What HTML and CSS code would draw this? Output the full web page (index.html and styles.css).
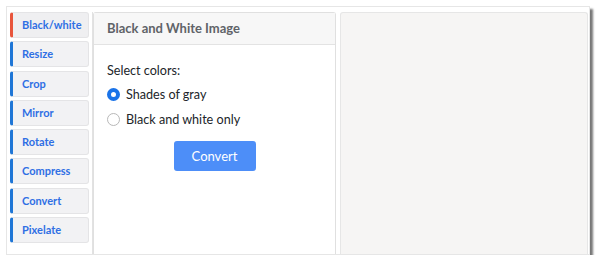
FILE: index.html
```html
<!DOCTYPE html>
<html lang="en">
<head>
    <meta charset="UTF-8">
    <title>Black and White Image</title>
    <link rel="stylesheet" href="styles.css">
</head>
<body>
    <div class="frame">
        <!-- Tool tabs -->
        <nav class="tabs">
            <a class="tab active">Black/white</a>
            <a class="tab">Resize</a>
            <a class="tab">Crop</a>
            <a class="tab">Mirror</a>
            <a class="tab">Rotate</a>
            <a class="tab">Compress</a>
            <a class="tab">Convert</a>
            <a class="tab">Pixelate</a>
        </nav>

        <!-- Options panel -->
        <section class="panel">
            <div class="panel-header">Black and White Image</div>
            <div class="panel-body">
                <p class="label">Select colors:</p>
                <label class="radio">
                    <input type="radio" name="colors" checked>
                    <span>Shades of gray</span>
                </label>
                <label class="radio">
                    <input type="radio" name="colors">
                    <span>Black and white only</span>
                </label>
                <div class="actions">
                    <button class="convert-btn">Convert</button>
                </div>
            </div>
        </section>

        <!-- Preview -->
        <section class="preview"></section>
    </div>
</body>
</html>
```

FILE: styles.css
```css
* {
    margin: 0;
    padding: 0;
    box-sizing: border-box;
}

body {
    background: #fff;
    font-family: Lato, 'Open Sans', sans-serif;
    color: #212529;
}

.frame {
    display: flex;
    margin: 6px 0 0 6px;
    width: 584px;
    height: 249px;
    padding: 5px 0 0 3px;
    background: #fff;
    border: 1px solid #e6e6e6;
    box-shadow: 3px 3px 2px #777;
}

.tabs {
    display: flex;
    flex-direction: column;
    gap: 3.3px;
    width: 83px;
    padding-right: 3px;
    border-right: 1px solid #e2e2e2;
}

.tab {
    display: block;
    height: 26px;
    line-height: 24px;
    padding-left: 9px;
    background: #f2f2f4;
    border: 1px solid #e4e4e6;
    border-left: 3px solid #1f76d6;
    border-radius: 3px;
    color: #2f6fe4;
    font-size: 11px;
    font-weight: 700;
    cursor: pointer;
}

.tab.active {
    border-left-color: #e8553c;
    background: #efeff1;
}

.panel {
    width: 243px;
    border: 1px solid #e0e0e0;
    border-bottom: none;
    border-radius: 3px 3px 0 0;
    background: #fff;
}

.panel-header {
    height: 32px;
    line-height: 31px;
    padding-left: 13px;
    background: #f7f7f7;
    border-bottom: 1px solid #e3e3e3;
    color: #5f6368;
    font-size: 13px;
    font-weight: 700;
}

.panel-body {
    padding: 17px 13px 0;
}

.label {
    font-size: 12.6px;
    line-height: 18px;
    margin-bottom: 2px;
}

.radio {
    display: flex;
    align-items: center;
    gap: 6px;
    height: 25px;
    font-size: 12.6px;
}

.radio input {
    appearance: none;
    width: 13px;
    height: 13px;
    border: 1px solid #b8b8b8;
    border-radius: 50%;
    background: #fff;
}

.radio input:checked {
    border: 4px solid #1a73e8;
}

.actions {
    display: flex;
    justify-content: center;
    margin-top: 9px;
}

.convert-btn {
    width: 82px;
    height: 30px;
    background: #4d8ef8;
    color: #fff;
    border: none;
    border-radius: 3px;
    font-family: inherit;
    font-size: 13px;
}

.preview {
    width: 248px;
    margin-left: 4px;
    background: #f6f5f4;
    border: 1px solid #e6e6e6;
    border-bottom: none;
    border-radius: 3px 3px 0 0;
}
```
